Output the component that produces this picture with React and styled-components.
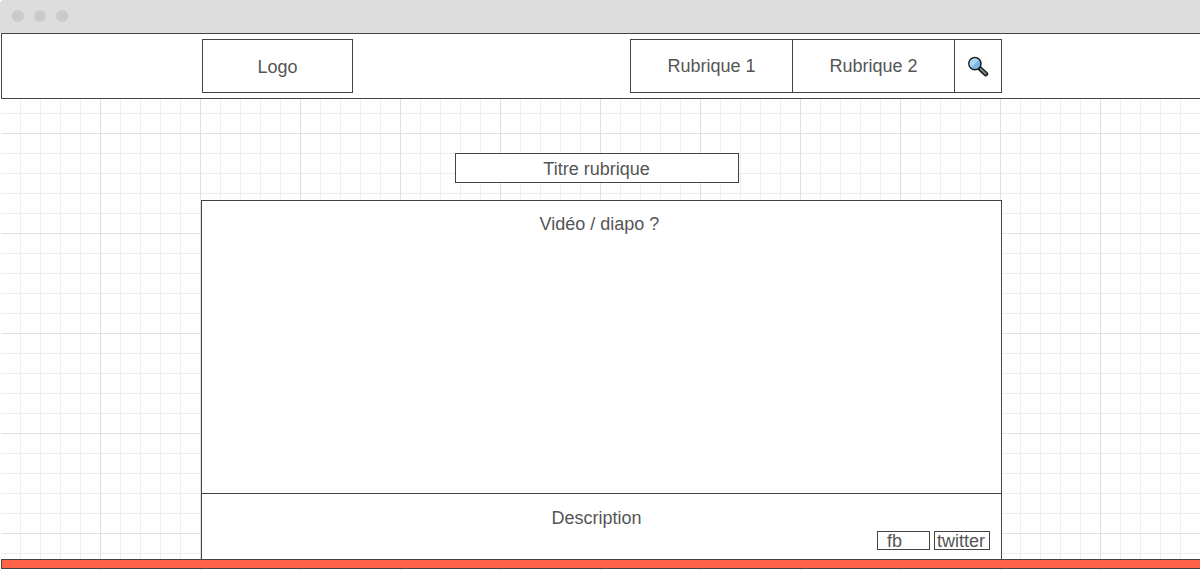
import React from 'react';
import styled, { createGlobalStyle } from 'styled-components';

const line = '#444444';

const GlobalStyle = createGlobalStyle`
  *, *::before, *::after { box-sizing: border-box; }
  body {
    margin: 0;
    background: #ffffff;
    color: #555555;
    font: 18px/20px "Liberation Sans", Arial, sans-serif;
  }
`;

const Page = styled.div`
  display: flex;
  flex-direction: column;
  min-height: 100vh;
  overflow: hidden;
`;

const TitleBar = styled.div`
  display: flex;
  align-items: center;
  gap: 10px;
  height: 33px;
  padding: 0 12px 1px;
  background: #dddddd;
  border-top-left-radius: 4px;
`;

const WindowDot = styled.span`
  width: 12px;
  height: 12px;
  border-radius: 50%;
  background: #cacaca;
`;

const Canvas = styled.div`
  flex: 1;
  display: flex;
  flex-direction: column;
  margin: 0 -2px 0 1px;
  background-image:
    linear-gradient(90deg, #e0e0e0 1px, transparent 1px),
    linear-gradient(#e0e0e0 1px, transparent 1px),
    linear-gradient(90deg, #eeeeee 1px, transparent 1px),
    linear-gradient(#eeeeee 1px, transparent 1px);
  background-size: 100px 100px, 100px 100px, 20px 20px, 20px 20px;
  background-position: -1px 0;
`;

const Header = styled.header`
  padding: 5px 0;
  background: #ffffff;
  border: 1px solid ${line};
`;

const Container = styled.div`
  width: 100%;
  max-width: 801px;
  margin: 0 auto;
`;

const HeaderRow = styled(Container)`
  display: flex;
  justify-content: space-between;
  padding-left: 1px;
`;

const Logo = styled.a`
  display: flex;
  align-items: center;
  justify-content: center;
  width: 151px;
  height: 54px;
  padding-top: 2px;
  border: 1px solid ${line};
  color: inherit;
  text-decoration: none;
`;

const Nav = styled.nav`
  display: flex;
  height: 54px;
  border: 1px solid ${line};
`;

const NavLink = styled.a`
  display: flex;
  align-items: center;
  justify-content: center;
  width: 162px;
  border-right: 1px solid ${line};
  color: inherit;
  text-decoration: none;
`;

const SearchButton = styled.button`
  display: flex;
  align-items: center;
  justify-content: center;
  width: 46px;
  padding: 0;
  border: 0;
  background: none;
`;

const Main = styled(Container)`
  display: flex;
  flex-direction: column;
  align-items: center;
  padding-top: 54px;
`;

const SectionTitle = styled.h1`
  width: 284px;
  height: 30px;
  margin: 0 10px 17px 0;
  padding: 5px 0;
  background: #ffffff;
  border: 1px solid ${line};
  font-size: 18px;
  line-height: 20px;
  font-weight: 400;
  text-align: center;
`;

const Card = styled.article`
  width: 100%;
  background: #ffffff;
  border: 1px solid ${line};
  border-bottom: 0;
  text-align: center;
`;

const Media = styled.section`
  height: 293px;
  padding: 13px 4px 0 0;
  border-bottom: 1px solid ${line};
`;

const Details = styled.section`
  padding: 14px 11px 9px;
`;

const Description = styled.p`
  margin: 0 10px 3px 0;
`;

const ShareRow = styled.div`
  display: flex;
  justify-content: flex-end;
  gap: 4px;
`;

const ShareLink = styled.a`
  width: ${(p) => p.$width}px;
  height: 19px;
  padding-left: ${(p) => p.$indent}px;
  border: 1px solid ${line};
  line-height: 19px;
  text-align: left;
  color: inherit;
  text-decoration: none;
`;

const Footer = styled.footer`
  height: 10px;
  background: #ff6347;
  border: 1px solid ${line};
`;

function SearchIcon() {
  return (
    <svg width="22" height="22" viewBox="0 0 22 22" fill="none" aria-hidden="true">
      <path d="M12.6 13.3 L18.8 19" stroke="#151515" strokeWidth="4.8" strokeLinecap="round" />
      <path d="M13.6 14 L18.6 18.7" stroke="#71868a" strokeWidth="2.2" strokeLinecap="round" />
      <circle cx="7.9" cy="8.6" r="6.1" fill="#79b7e8" stroke="#1d1d1d" strokeWidth="1.5" />
      <path d="M2.7 9.4 A5.2 5.2 0 0 1 11.6 5 L4.2 12.2 A5.2 5.2 0 0 1 2.7 9.4Z" fill="#a9d5f5" />
    </svg>
  );
}

export default function App() {
  return (
    <>
      <GlobalStyle />
      <Page>
        <TitleBar>
          <WindowDot />
          <WindowDot />
          <WindowDot />
        </TitleBar>
        <Canvas>
          <Header>
            <HeaderRow>
              <Logo href="#">Logo</Logo>
              <Nav>
                <NavLink href="#rubrique-1">Rubrique 1</NavLink>
                <NavLink href="#rubrique-2">Rubrique 2</NavLink>
                <SearchButton type="button" aria-label="Rechercher">
                  <SearchIcon />
                </SearchButton>
              </Nav>
            </HeaderRow>
          </Header>
          <Main as="main">
            <SectionTitle>Titre rubrique</SectionTitle>
            <Card>
              <Media>Vidéo / diapo ?</Media>
              <Details>
                <Description>Description</Description>
                <ShareRow>
                  <ShareLink href="#fb" $width={53} $indent={9}>fb</ShareLink>
                  <ShareLink href="#twitter" $width={56} $indent={2}>twitter</ShareLink>
                </ShareRow>
              </Details>
            </Card>
          </Main>
          <Footer />
        </Canvas>
      </Page>
    </>
  );
}
